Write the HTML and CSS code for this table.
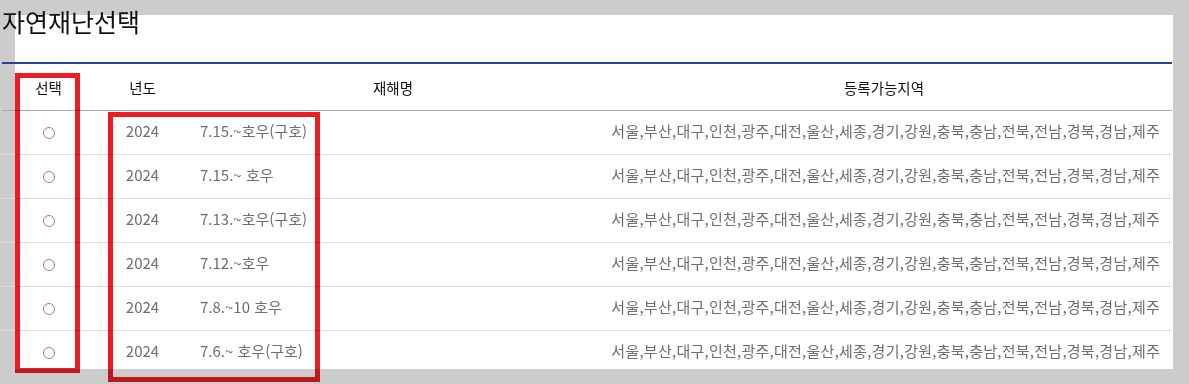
FILE: index.html
```html
<!DOCTYPE html>
<html lang="ko">
<head>
    <meta charset="UTF-8">
    <title>자연재난선택</title>
    <link rel="stylesheet" href="styles.css">
</head>
<body>
    <div class="sheet">
        <div class="page">
            <h1 class="title">자연재난선택</h1>
            <table class="disaster-table">
                <colgroup>
                    <col class="col-pick">
                    <col class="col-year">
                    <col class="col-name">
                    <col>
                </colgroup>
                <thead>
                    <tr>
                        <th>선택</th>
                        <th>년도</th>
                        <th>재해명</th>
                        <th>등록가능지역</th>
                    </tr>
                </thead>
                <tbody>
                    <tr>
                        <td class="pick"><input type="radio" name="disaster" class="radio"></td>
                        <td class="year">2024</td>
                        <td class="name">7.15.~호우(구호)</td>
                        <td class="region">서울,부산,대구,인천,광주,대전,울산,세종,경기,강원,충북,충남,전북,전남,경북,경남,제주</td>
                    </tr>
                    <tr>
                        <td class="pick"><input type="radio" name="disaster" class="radio"></td>
                        <td class="year">2024</td>
                        <td class="name">7.15.~ 호우</td>
                        <td class="region">서울,부산,대구,인천,광주,대전,울산,세종,경기,강원,충북,충남,전북,전남,경북,경남,제주</td>
                    </tr>
                    <tr>
                        <td class="pick"><input type="radio" name="disaster" class="radio"></td>
                        <td class="year">2024</td>
                        <td class="name">7.13.~호우(구호)</td>
                        <td class="region">서울,부산,대구,인천,광주,대전,울산,세종,경기,강원,충북,충남,전북,전남,경북,경남,제주</td>
                    </tr>
                    <tr>
                        <td class="pick"><input type="radio" name="disaster" class="radio"></td>
                        <td class="year">2024</td>
                        <td class="name">7.12.~호우</td>
                        <td class="region">서울,부산,대구,인천,광주,대전,울산,세종,경기,강원,충북,충남,전북,전남,경북,경남,제주</td>
                    </tr>
                    <tr>
                        <td class="pick"><input type="radio" name="disaster" class="radio"></td>
                        <td class="year">2024</td>
                        <td class="name">7.8.~10 호우</td>
                        <td class="region">서울,부산,대구,인천,광주,대전,울산,세종,경기,강원,충북,충남,전북,전남,경북,경남,제주</td>
                    </tr>
                    <tr>
                        <td class="pick"><input type="radio" name="disaster" class="radio"></td>
                        <td class="year">2024</td>
                        <td class="name">7.6.~ 호우(구호)</td>
                        <td class="region">서울,부산,대구,인천,광주,대전,울산,세종,경기,강원,충북,충남,전북,전남,경북,경남,제주</td>
                    </tr>
                </tbody>
            </table>
        </div>
    </div>

    <!-- highlight frames drawn over the table -->
    <div class="mark mark-pick"></div>
    <div class="mark mark-year"></div>
</body>
</html>
```

FILE: styles.css
```css
body {
    margin: 0;
    background: #cccccc;
    font-family: "Noto Sans CJK KR", "Noto Sans", sans-serif;
}
.sheet {
    display: flow-root;
    background: #ffffff;
    margin: 15px 16px 0 15px;
    height: 354px;
}
.page {
    width: 1170px;
    margin: -13px 0 0 -13px;
}
.title {
    margin: 0;
    height: 62px;
    box-sizing: border-box;
    padding-top: 3px;
    font-size: 25px;
    font-weight: normal;
    line-height: 32px;
    color: #111;
    border-bottom: 2px solid #2e3d96;
}
.disaster-table {
    width: 100%;
    border-collapse: collapse;
    table-layout: fixed;
}
.col-pick {
    width: 93px;
}
.col-year {
    width: 95px;
}
.col-name {
    width: 406px;
}
.disaster-table th {
    height: 46px;
    padding: 0;
    font-size: 14.5px;
    font-weight: normal;
    color: #111;
    text-align: center;
    border-bottom: 1px solid #aaaaaa;
}
.disaster-table td {
    box-sizing: border-box;
    height: 44px;
    padding: 0 0 4px;
    font-size: 15px;
    color: #6e6e6e;
    border-bottom: 1px solid #dddddd;
}
.disaster-table tbody tr:last-child td {
    border-bottom-color: #888888;
}
.pick {
    text-align: center;
}
.year {
    text-align: center;
}
.name {
    padding-left: 10px !important;
}
.region {
    text-align: right;
    letter-spacing: 0.25px;
    padding-right: 12px !important;
}
.radio {
    appearance: none;
    width: 12px;
    height: 12px;
    margin: 0;
    border: 1px solid #8a8a8a;
    border-radius: 50%;
    background: #fff;
    vertical-align: middle;
}
.mark {
    position: absolute;
    box-sizing: border-box;
    border: 5px solid #ee1c25;
    mix-blend-mode: multiply;
}
.mark-pick {
    left: 15px;
    top: 73px;
    width: 65px;
    height: 300px;
}
.mark-year {
    left: 108px;
    top: 112px;
    width: 212px;
    height: 270px;
}
```
